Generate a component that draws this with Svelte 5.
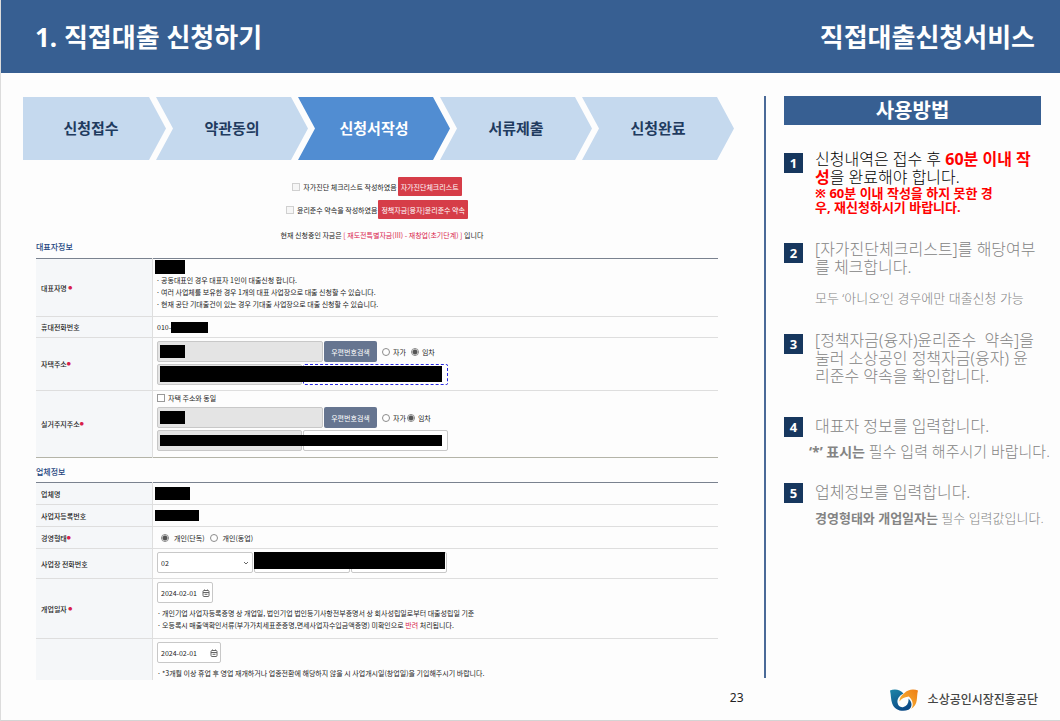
<script>
  const steps = ['신청접수', '약관동의', '신청서작성', '서류제출', '신청완료'];
  let current = 2;

  let homeType = 'rent';
  let liveType = 'rent';
  let bizType = 'single';
</script>

<div class="page">
  <header>
    <h1>1. 직접대출 신청하기</h1>
    <p>직접대출신청서비스</p>
  </header>

  <main>
    <section class="content">
      <ol class="steps">
        {#each steps as step, i}
          <li class:active={i === current}>{step}</li>
        {/each}
      </ol>

      <form>
        <div class="checks">
          <div class="check-row">
            <label><input type="checkbox" /> 자가진단 체크리스트 작성하였음</label>
            <button type="button" class="red">자가진단체크리스트</button>
          </div>
          <div class="check-row">
            <label><input type="checkbox" /> 윤리준수 약속을 작성하였음</label>
            <button type="button" class="red">정책자금[융자]윤리준수 약속</button>
          </div>
          <p>현재 신청중인 자금은 <em>[ 재도전특별자금(III) - 재창업(초기단계) ]</em> 입니다</p>
        </div>

        <h2>대표자정보</h2>
        <table class="owner">
          <tbody>
            <tr class="r-name">
              <th scope="row">대표자명 <i>●</i></th>
              <td>
                <span class="mask name"></span>
                <ul>
                  <li>공동대표인 경우 대표자 1인이 대출신청 합니다.</li>
                  <li>여러 사업체를 보유한 경우 1개의 대표 사업장으로 대출 신청할 수 있습니다.</li>
                  <li>현재 공단 기대출건이 있는 경우 기대출 사업장으로 대출 신청할 수 있습니다.</li>
                </ul>
              </td>
            </tr>
            <tr class="r-mobile">
              <th scope="row">휴대전화번호</th>
              <td><div class="line none">010-<span class="mask mobile"></span></div></td>
            </tr>
            <tr class="r-home">
              <th scope="row">자택주소<i>●</i></th>
              <td>
                <div class="line">
                  <input class="zip" type="text" aria-label="자택 우편번호" readonly />
                  <button type="button" class="search">우편번호검색</button>
                  <label><input type="radio" name="home" value="own" bind:group={homeType} /> 자가</label>
                  <label><input type="radio" name="home" value="rent" bind:group={homeType} /> 임차</label>
                  <span class="mask over zip-mask"></span>
                </div>
                <div class="line">
                  <input class="addr" type="text" aria-label="자택 주소" readonly />
                  <input class="addr focus" type="text" aria-label="자택 상세주소" />
                  <span class="mask over addr-mask"></span>
                </div>
              </td>
            </tr>
            <tr class="r-live">
              <th scope="row">실거주지주소<i>●</i></th>
              <td>
                <label class="same"><input type="checkbox" /> 자택 주소와 동일</label>
                <div class="line tight">
                  <input class="zip" type="text" aria-label="실거주지 우편번호" readonly />
                  <button type="button" class="search">우편번호검색</button>
                  <label><input type="radio" name="live" value="own" bind:group={liveType} /> 자가</label>
                  <label><input type="radio" name="live" value="rent" bind:group={liveType} /> 임차</label>
                  <span class="mask over zip-mask"></span>
                </div>
                <div class="line">
                  <input class="addr" type="text" aria-label="실거주지 주소" readonly />
                  <input class="addr" type="text" aria-label="실거주지 상세주소" />
                  <span class="mask over addr-mask thin"></span>
                </div>
              </td>
            </tr>
          </tbody>
        </table>

        <h2 class="second">업체정보</h2>
        <table class="company">
          <tbody>
            <tr class="r-text">
              <th scope="row">업체명</th>
              <td><span class="mask biz"></span></td>
            </tr>
            <tr class="r-text">
              <th scope="row">사업자등록번호</th>
              <td><span class="mask bizno"></span></td>
            </tr>
            <tr class="r-text">
              <th scope="row">경영형태<i>●</i></th>
              <td>
                <div class="line types">
                  <label><input type="radio" name="biz" value="single" bind:group={bizType} /> 개인(단독)</label>
                  <label><input type="radio" name="biz" value="joint" bind:group={bizType} /> 개인(동업)</label>
                </div>
              </td>
            </tr>
            <tr class="r-tel">
              <th scope="row">사업장 전화번호</th>
              <td>
                <div class="line">
                  <span class="select">
                    <select aria-label="지역번호">
                      <option>02</option>
                    </select>
                    <svg viewBox="0 0 6 4" width="6" height="4"><path d="M1 1l2 2 2-2" /></svg>
                  </span>
                  <input class="tel" type="text" aria-label="전화번호 앞자리" />
                  <input class="tel" type="text" aria-label="전화번호 뒷자리" />
                  <span class="mask over tel-mask"></span>
                </div>
              </td>
            </tr>
            <tr class="r-open">
              <th scope="row">개업일자 <i>●</i></th>
              <td>
                <div class="date">
                  <input type="text" value="2024-02-01" aria-label="개업일자" />
                  <svg viewBox="0 0 8 8" width="8" height="8"><rect x="1" y="1.5" width="6" height="6" rx="1" /><path d="M1 3.5h6M2.5 5.3h3M2.5 .5v1M5.5 .5v1" /></svg>
                </div>
                <ul>
                  <li>개인기업 사업자등록증명 상 개업일, 법인기업 법인등기사항전부증명서 상 회사성립일로부터 대출성립일 기준</li>
                  <li><span>오등록시 매출액확인서류(부가가치세표준증명,면세사업자수입금액증명) 미확인으로 <em>반려</em> 처리됩니다.</span></li>
                </ul>
              </td>
            </tr>
            <tr class="r-reopen">
              <th></th>
              <td>
                <div class="date wide">
                  <input type="text" value="2024-02-01" aria-label="사업개시일" />
                  <svg viewBox="0 0 8 8" width="8" height="8"><rect x="1" y="1.5" width="6" height="6" rx="1" /><path d="M1 3.5h6M2.5 5.3h3M2.5 .5v1M5.5 .5v1" /></svg>
                </div>
                <ul>
                  <li>*3개월 이상 휴업 후 영업 재개하거나 업종전환에 해당하지 않을 시 사업개시일(창업일)을 기입해주시기 바랍니다.</li>
                </ul>
              </td>
            </tr>
          </tbody>
        </table>
      </form>
    </section>

    <aside>
      <h2>사용방법</h2>
      <ol class="guide">
        <li class="now long">
          <span class="num">1</span>
          <div>
            <p>신청내역은 접수 후 <b>60분 이내 작<br />성</b>을 완료해야 합니다.</p>
            <p class="warn">※ 60분 이내 작성을 하지 못한 경<br />우, 재신청하시기 바랍니다.</p>
          </div>
        </li>
        <li class="long">
          <span class="num">2</span>
          <div>
            <p>[자가진단체크리스트]를 해당여부<br />를 체크합니다.</p>
            <p class="note far">모두 ‘아니오’인 경우에만 대출신청 가능</p>
          </div>
        </li>
        <li class="long">
          <span class="num">3</span>
          <div>
            <p>[정책자금(융자)윤리준수&nbsp; 약속]을<br />눌러 소상공인 정책자금(융자) 윤<br />리준수 약속을 확인합니다.</p>
          </div>
        </li>
        <li>
          <span class="num">4</span>
          <div>
            <p>대표자 정보를 입력합니다.</p>
            <p class="note big"><b>‘*’ 표시는</b> 필수 입력 해주시기 바랍니다.</p>
          </div>
        </li>
        <li>
          <span class="num">5</span>
          <div>
            <p>업체정보를 입력합니다.</p>
            <p class="note"><b>경영형태와 개업일자는</b> 필수 입력값입니다.</p>
          </div>
        </li>
      </ol>
    </aside>
  </main>

  <footer>
    <span class="page-no">23</span>
    <div class="logo">
      <svg viewBox="0 0 28 22" width="28" height="22">
        <defs>
          <linearGradient id="blue" x1="0" y1="0" x2="0.5" y2="1">
            <stop offset="0" stop-color="#1f86a8" />
            <stop offset="1" stop-color="#0b4a86" />
          </linearGradient>
          <linearGradient id="gold" x1="1" y1="0" x2="0" y2="1">
            <stop offset="0" stop-color="#ee7d14" />
            <stop offset="1" stop-color="#f8bd3c" />
          </linearGradient>
        </defs>
        <path fill="url(#blue)" d="M0 1.500C4 -.3 10 0 13.500 4.500C9.500 6.500 7 10 7.500 13.500C8 17 10.500 18.800 13.500 18C17 17.200 19 14 18.500 9.500C22.500 13 22.500 18.500 18.500 20.800C12 23.500 4.500 21 2.200 14.500C.8 10.500 1 6 0 1.500Z" />
        <path fill="url(#gold)" d="M28 1.500C24 -.3 18 0 14.200 4.200C11 6.500 9.300 9 9.500 12.500C11 10 14 8 18.800 7.500C22.800 11 24 16 21 20C24.500 18 26.200 15 26.700 11.500C27.300 8 27 5 28 1.500Z" />
      </svg>
      <span>소상공인시장진흥공단</span>
    </div>
  </footer>
</div>

<style>
  :global(body) {
    margin: 0;
    background: #fdfdfd;
  }
  .page {
    min-height: 100vh;
    box-sizing: border-box;
    display: flex;
    flex-direction: column;
    border-left: 1px solid #dcdcdc;
    border-bottom: 1px solid #d4d4d4;
    font-family: "Noto Sans", "Noto Sans CJK KR", sans-serif;
    color: #222;
  }
  h1, h2, p, ol, ul {
    margin: 0;
    padding: 0;
    list-style: none;
  }
  header {
    height: 73px;
    padding: 0 25px 0 34px;
    display: flex;
    align-items: center;
    justify-content: space-between;
    background: #375f92;
    color: #fff;
    font-size: 26px;
    line-height: 38px;
    font-weight: 700;
  }
  header h1 {
    font-size: 26px;
  }
  main {
    flex: 1;
    display: grid;
    grid-template-columns: minmax(0, 1fr) auto;
    gap: 30px;
    padding: 23px 19px 0 22px;
  }

  /* step arrows */
  .steps {
    display: flex;
    height: 63px;
    margin-top: 1px;
  }
  .steps li {
    flex: 1 1 16px;
    box-sizing: border-box;
    margin-left: -10px;
    padding-bottom: 2px;
    display: flex;
    align-items: center;
    justify-content: center;
    background: #c5d9ee;
    color: #1f3b5f;
    font-size: 15px;
    line-height: 20px;
    font-weight: 700;
    white-space: nowrap;
    clip-path: polygon(0 0, calc(100% - 17px) 0, 100% 50%, calc(100% - 17px) 100%, 0 100%, 17px 50%);
  }
  .steps li:first-child {
    flex-basis: 7px;
    margin-left: 0;
    padding-right: 7px;
    clip-path: polygon(0 0, calc(100% - 17px) 0, 100% 50%, calc(100% - 17px) 100%, 0 100%);
  }
  .steps li.active {
    background: #518dd2;
    color: #fff;
  }

  /* application form */
  form {
    margin: 17px 16px 0 13px;
    font-family: "Noto Sans CJK KR", sans-serif;
    font-size: 7px;
    line-height: 12px;
  }
  form input, form button, form select {
    margin: 0;
    box-sizing: border-box;
    font: inherit;
    color: inherit;
  }
  form em {
    font-style: normal;
    color: #d8204a;
  }
  form label {
    display: flex;
    align-items: center;
    gap: 3px;
    white-space: nowrap;
  }
  .checks {
    display: flex;
    flex-direction: column;
    align-items: center;
    gap: 4px;
  }
  .checks p {
    margin-top: 7px;
    padding-left: 10px;
    line-height: 11px;
  }
  .check-row {
    display: flex;
    align-items: center;
    gap: 1px;
  }
  input[type="checkbox"] {
    appearance: none;
    width: 8px;
    height: 8px;
    border: 1px solid #999;
    background: #fff;
  }
  .checks input[type="checkbox"] {
    border-color: #d0d0d0;
    background: #f6f6f6;
  }
  button.red {
    height: 19px;
    padding: 0 3px;
    border: 0;
    border-radius: 1px;
    background: #d63d48;
    color: #fff;
  }
  form h2 {
    font-size: 8px;
    line-height: 12px;
    font-weight: 500;
    color: #24457f;
    margin-bottom: 5px;
  }
  form h2.second {
    margin-top: 8px;
    margin-bottom: 4px;
  }
  table {
    width: 100%;
    border-collapse: collapse;
    table-layout: fixed;
    border-top: 1px solid #7a828f;
  }
  table.owner {
    border-bottom: 1px solid #b4b4a8;
  }
  tr {
    border-bottom: 1px solid #dedede;
  }
  tr:last-child {
    border-bottom: 0;
  }
  th {
    width: 111px;
    padding: 0 0 0 5px;
    background: #f5f7f9;
    border-right: 1px solid #dedede;
    font-weight: 500;
    text-align: left;
  }
  th i {
    font-size: 4px;
    font-style: normal;
    color: #d8204a;
    vertical-align: 1px;
  }
  td {
    padding: 0 4px;
    vertical-align: middle;
  }
  td li {
    display: flex;
    gap: 2px;
    white-space: nowrap;
  }
  td li::before {
    content: "·";
    width: 3px;
  }
  .r-name { height: 58px; }
  .r-name td { padding: 1px 2px 0; vertical-align: top; }
  .r-name ul { padding-left: 1px; }
  .r-mobile { height: 21px; }
  .r-home { height: 53px; }
  .r-live { height: 67px; }
  .r-text { height: 22px; }
  .r-tel { height: 30px; }
  .r-open { height: 60px; }
  .r-reopen { height: 41px; }
  .r-home td, .r-tel td, .r-open td, .r-reopen td {
    padding-top: 3px;
    vertical-align: top;
  }
  .r-live td {
    padding-top: 1px;
    vertical-align: top;
  }

  .line {
    position: relative;
    display: flex;
    align-items: center;
    gap: 1px;
  }
  .line.none {
    gap: 0;
  }
  .line + .line {
    margin-top: 2px;
  }
  .line button + label {
    margin-left: 4px;
  }
  .line label + label {
    margin-left: 4px;
  }
  .line.tight label + label {
    margin-left: 0;
  }
  .same {
    margin-bottom: 3px;
  }
  .types {
    padding-left: 4px;
  }
  .types label {
    gap: 5px;
  }
  input[type="text"], select {
    width: 144px;
    height: 21px;
    padding: 0 3px;
    border: 1px solid #c8c8c8;
    border-radius: 2px;
    background: #fff;
  }
  input[type="text"]:read-only {
    background: #e4e4e4;
  }
  .line input.zip {
    width: 166px;
  }
  .line input.addr {
    width: 145px;
  }
  .line input.focus {
    border: 1px dashed #2a2ae0;
  }
  .line input.tel {
    width: 96px;
  }
  button.search {
    width: 53px;
    height: 21px;
    padding: 0;
    border: 0;
    border-radius: 2px;
    background: #667590;
    color: #fff;
  }
  input[type="radio"] {
    appearance: none;
    width: 8px;
    height: 8px;
    border: 1px solid #8c8c8c;
    border-radius: 50%;
    background: #fff;
  }
  input[type="radio"]:checked {
    background: radial-gradient(circle, #555 0 2px, #fff 3px);
  }
  .select {
    position: relative;
    display: flex;
  }
  .select select {
    appearance: none;
    width: 96px;
  }
  .select svg {
    position: absolute;
    right: 4px;
    top: 9px;
  }
  form svg rect, form svg path {
    fill: none;
    stroke: #666;
    stroke-width: 1;
  }
  .date {
    position: relative;
    width: 56px;
    margin-bottom: 4px;
  }
  .date.wide {
    width: 64px;
  }
  .date input {
    display: block;
    width: 100%;
  }
  .date svg {
    position: absolute;
    right: 3px;
    top: 7px;
  }

  /* blacked out personal data */
  .mask {
    display: block;
    background: #000;
  }
  .mask.name { width: 30px; height: 14px; }
  .mask.mobile { width: 37px; height: 11px; }
  .mask.biz { width: 35px; height: 13px; }
  .mask.bizno { width: 44px; height: 11px; }
  td > .mask.biz, td > .mask.bizno { margin-left: -2px; }
  .mask.over { position: absolute; left: 3px; }
  .mask.zip-mask { top: 4px; width: 25px; height: 13px; }
  .mask.addr-mask { top: 2px; width: 282px; height: 16px; }
  .mask.addr-mask.thin { top: 5px; height: 11px; }
  .mask.tel-mask { left: 97px; top: 0; width: 191px; height: 17px; }

  /* guide */
  aside {
    width: 257px;
    margin-bottom: 2px;
    padding-left: 18px;
    border-left: 2px solid #4a6a98;
  }
  aside h2 {
    height: 29px;
    background: #375f92;
    color: #fff;
    font-size: 20px;
    line-height: 29px;
    font-weight: 700;
    text-align: center;
  }
  .guide {
    display: grid;
    grid-template-rows: 90px 91px 86px 66px auto;
    margin-top: 25px;
    font-size: 16px;
    line-height: 18px;
    font-weight: 300;
    color: #848484;
    white-space: nowrap;
  }
  .guide li {
    display: grid;
    grid-template-columns: 19px 1fr;
    gap: 12px;
    align-items: start;
  }
  .guide li.now {
    color: #000;
  }
  .num {
    height: 20px;
    background: #17375e;
    color: #fff;
    font-size: 13px;
    line-height: 20px;
    font-weight: 700;
    text-align: center;
  }
  .long .num {
    margin-top: 3px;
  }
  .guide b {
    font-weight: 700;
  }
  .now b, .guide .warn {
    color: #f00;
  }
  .guide .warn {
    font-size: 13px;
    line-height: 14px;
    font-weight: 700;
  }
  .guide .note {
    margin-top: 8px;
    font-size: 13px;
  }
  .guide .note.far {
    margin-top: 13px;
  }
  .guide .note.big {
    margin-top: 7px;
    margin-left: -6px;
    font-size: 15px;
  }
  .guide .note.big b {
    font-size: 14px;
  }

  footer {
    height: 40px;
    padding: 0 22px;
    display: flex;
    align-items: center;
    justify-content: flex-end;
    gap: 146px;
  }
  .page-no {
    padding-bottom: 5px;
    font-size: 12px;
    line-height: 16px;
  }
  .logo {
    display: flex;
    align-items: center;
    gap: 10px;
    color: #444;
    font-size: 12px;
    line-height: 18px;
    font-weight: 500;
  }
</style>
